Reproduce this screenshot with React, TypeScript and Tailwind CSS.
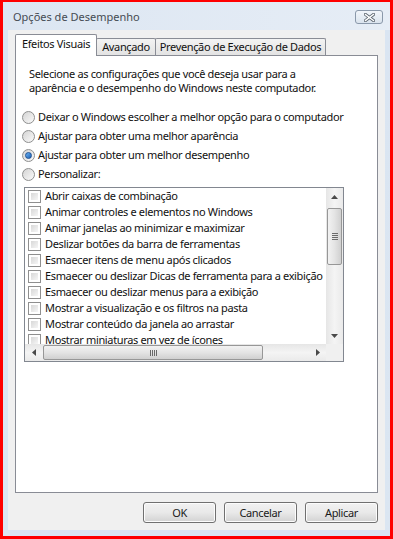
import React from "react";

const effects = [
  "Abrir caixas de combinação",
  "Animar controles e elementos no Windows",
  "Animar janelas ao minimizar e maximizar",
  "Deslizar botões da barra de ferramentas",
  "Esmaecer itens de menu após clicados",
  "Esmaecer ou deslizar Dicas de ferramenta para a exibição",
  "Esmaecer ou deslizar menus para a exibição",
  "Mostrar a visualização e os filtros na pasta",
  "Mostrar conteúdo da janela ao arrastar",
  "Mostrar miniaturas em vez de ícones",
];

const radios = [
  { label: "Deixar o Windows escolher a melhor opção para o computador", checked: false },
  { label: "Ajustar para obter uma melhor aparência", checked: false },
  { label: "Ajustar para obter um melhor desempenho", checked: true },
  { label: "Personalizar:", checked: false },
];

function Radio({ checked }: { checked: boolean }) {
  return (
    <span className="w-[13px] h-[13px] shrink-0 rounded-full border border-[#8e8f8f] bg-gradient-to-br from-[#d4d4d4] to-[#fafafa] flex items-center justify-center">
      {checked && (
        <span className="w-[7px] h-[7px] rounded-full bg-gradient-to-br from-[#6bb4f5] to-[#1c5fb2] border border-[#1d4f91]" />
      )}
    </span>
  );
}

function Checkbox() {
  return (
    <span className="w-[13px] h-[13px] shrink-0 border border-[#8f8f8f] bg-white p-[2px]">
      <span className="block w-full h-full bg-gradient-to-br from-[#d8d8d8] to-[#f6f6f6]" />
    </span>
  );
}

function Arrow({ dir }: { dir: "up" | "down" | "left" | "right" }) {
  const pts = {
    up: "0,4 3.5,0 7,4",
    down: "0,0 3.5,4 7,0",
    left: "4,0 0,3.5 4,7",
    right: "0,0 4,3.5 0,7",
  }[dir];
  const vertical = dir === "up" || dir === "down";
  return (
    <svg width={vertical ? 7 : 4} height={vertical ? 4 : 7} viewBox={vertical ? "0 0 7 4" : "0 0 4 7"}>
      <polygon points={pts} fill="#4a4a4a" />
    </svg>
  );
}

function Button({ label }: { label: string }) {
  return (
    <button className="w-[73px] h-[21px] rounded-[3px] border border-[#707070] bg-gradient-to-b from-[#f2f2f2] via-[#e9e9e9] to-[#d2d2d2] text-[#1a1a1a] leading-none shadow-[inset_0_0_0_1px_#fcfcfc]">
      {label}
    </button>
  );
}

export default function App() {
  return (
    <div
      className="w-[393px] h-[539px] bg-[#ff0000] pt-[2px] px-[3px] pb-[3px] text-[11px] tracking-[-0.35px] text-[#111]"
      style={{ fontFamily: '"Noto Sans", "Open Sans", sans-serif' }}
    >
      <div className="h-full flex flex-col bg-gradient-to-b from-[#dae5f2] to-[#dbe6f2]">
        {/* Title bar */}
        <div className="h-[28px] flex items-start justify-between pl-[10px] pr-[7px] bg-gradient-to-r from-[#dce6f2] to-[#e6edf6]">
          <span className="mt-[6px] text-[11px] tracking-[0px] leading-[18px] text-[#454b52]">Opções de Desempenho</span>
          <button className="mt-[8px] w-[28px] h-[14px] rounded-[3px] border border-[#8a98aa] bg-gradient-to-b from-[#f1f5fa] to-[#dbe4ee] flex items-center justify-center">
            <svg width="11" height="9" viewBox="0 0 11 9">
              <path d="M1.5 1.5 L9.5 7.5 M9.5 1.5 L1.5 7.5" stroke="#5d6670" strokeWidth="3.2" strokeLinecap="square" />
              <path d="M1.5 1.5 L9.5 7.5 M9.5 1.5 L1.5 7.5" stroke="#ffffff" strokeWidth="1.4" strokeLinecap="square" />
            </svg>
          </button>
        </div>

        {/* Client area */}
        <div className="flex-1 mx-[5px] mb-[6px] bg-[#f0f0f0] flex flex-col px-[7px] pt-[4px] pb-[7px]">
          {/* Tabs */}
          <div className="flex items-end h-[21px] whitespace-nowrap">
            <div className="relative z-10 w-[82px] h-[22px] -mb-[1px] bg-white border border-b-0 border-[#898c95] rounded-t-[2px] flex items-center justify-center pb-[2px]">
              Efeitos Visuais
            </div>
            <div className="w-[60px] h-[17px] -ml-[1px] bg-gradient-to-b from-[#f3f3f3] to-[#e3e3e3] border border-b-0 border-[#898c95] rounded-t-[2px] flex items-center justify-center">
              Avançado
            </div>
            <div className="w-[171px] h-[17px] -ml-[1px] bg-gradient-to-b from-[#f3f3f3] to-[#e3e3e3] border border-b-0 border-[#898c95] rounded-t-[2px] flex items-center justify-center">
              Prevenção de Execução de Dados
            </div>
          </div>

          {/* Tab panel */}
          <div className="flex-1 bg-white border border-[#898c95] flex flex-col pt-[11px]">
            <p className="pl-[13px] leading-[14px] whitespace-nowrap">
              Selecione as configurações que você deseja usar para a
              <br />
              aparência e o desempenho do Windows neste computador.
            </p>

            <div className="mt-[13px] pl-[6px] flex flex-col whitespace-nowrap">
              {radios.map((r) => (
                <div key={r.label} className="h-[19px] flex items-center gap-[3px]">
                  <Radio checked={r.checked} />
                  <span>{r.label}</span>
                </div>
              ))}
            </div>

            {/* List box */}
            <div className="ml-[8px] mt-[3px] w-[320px] h-[175px] border border-[#828790] grid grid-cols-[1fr_17px] grid-rows-[1fr_17px]">
              <div className="overflow-hidden">
                {effects.map((e) => (
                  <div key={e} className="h-[16px] flex items-center gap-[4px] pl-[3px] whitespace-nowrap">
                    <Checkbox />
                    <span>{e}</span>
                  </div>
                ))}
              </div>

              {/* Vertical scrollbar */}
              <div className="flex flex-col bg-gradient-to-r from-[#e6e6e6] via-[#f4f4f4] to-[#eaeaea]">
                <div className="h-[17px] flex items-center justify-center">
                  <Arrow dir="up" />
                </div>
                <div className="mt-[3px] mx-[1px] h-[57px] rounded-[2px] border border-[#979797] bg-gradient-to-r from-[#f2f2f2] via-[#e4e4e4] to-[#d0d0d0] flex flex-col items-center justify-center gap-[1px]">
                  <span className="w-[6px] h-[1px] bg-[#6a6a6a]" />
                  <span className="w-[6px] h-[1px] bg-[#6a6a6a]" />
                  <span className="w-[6px] h-[1px] bg-[#6a6a6a]" />
                  <span className="w-[6px] h-[1px] bg-[#6a6a6a]" />
                </div>
                <div className="flex-1" />
                <div className="h-[17px] flex items-center justify-center">
                  <Arrow dir="down" />
                </div>
              </div>

              {/* Horizontal scrollbar */}
              <div className="flex items-stretch bg-gradient-to-b from-[#e6e6e6] via-[#f4f4f4] to-[#eaeaea]">
                <div className="w-[17px] flex items-center justify-center">
                  <Arrow dir="left" />
                </div>
                <div className="ml-[1px] my-[1px] w-[220px] rounded-[2px] border border-[#979797] bg-gradient-to-b from-[#f2f2f2] via-[#e4e4e4] to-[#d0d0d0] flex items-center justify-center gap-[1px]">
                  <span className="w-[1px] h-[6px] bg-[#6a6a6a]" />
                  <span className="w-[1px] h-[6px] bg-[#6a6a6a]" />
                  <span className="w-[1px] h-[6px] bg-[#6a6a6a]" />
                  <span className="w-[1px] h-[6px] bg-[#6a6a6a]" />
                </div>
                <div className="flex-1" />
                <div className="w-[17px] flex items-center justify-center">
                  <Arrow dir="right" />
                </div>
              </div>
              <div className="bg-[#f0f0f0]" />
            </div>
          </div>

          {/* Buttons */}
          <div className="mt-[9px] flex justify-end gap-[8px]">
            <Button label="OK" />
            <Button label="Cancelar" />
            <Button label="Aplicar" />
          </div>
        </div>
      </div>
    </div>
  );
}
